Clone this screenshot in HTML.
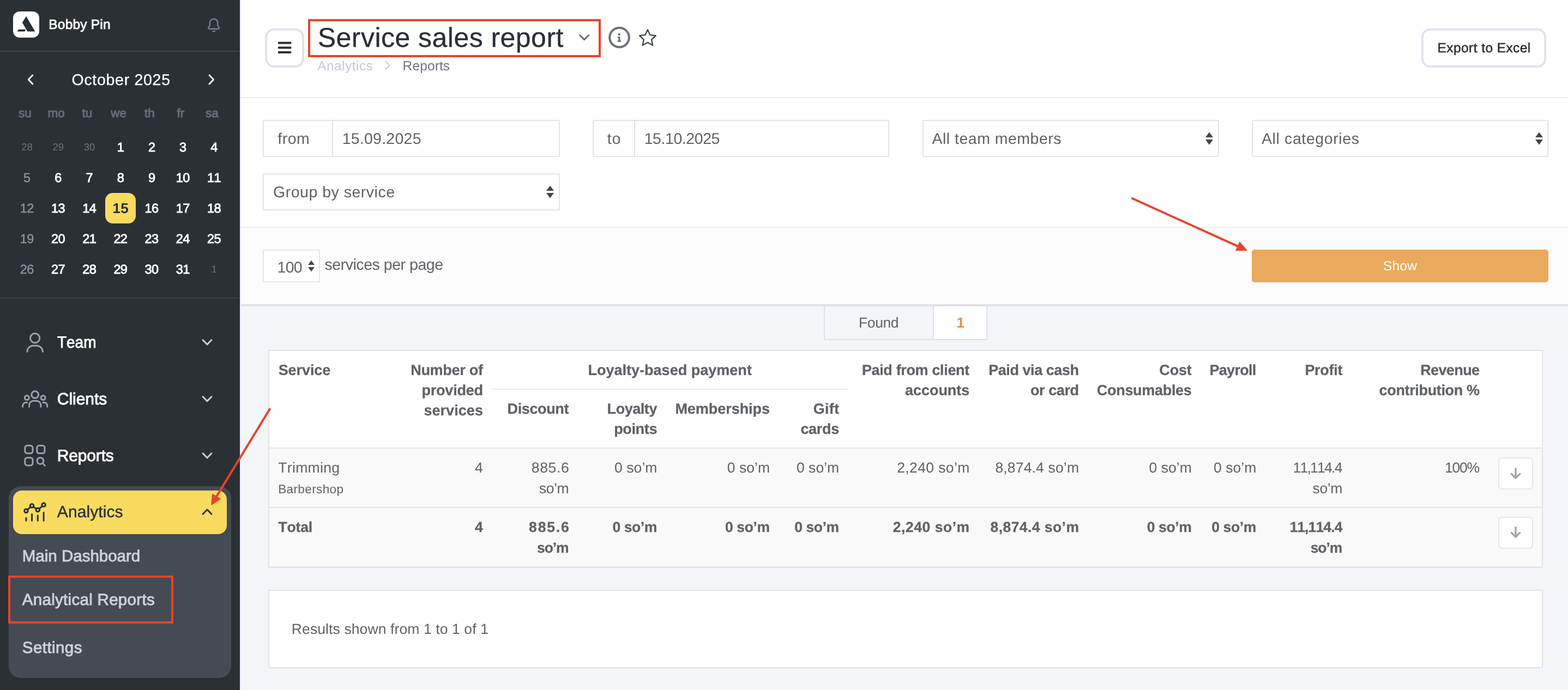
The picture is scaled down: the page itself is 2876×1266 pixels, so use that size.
<!DOCTYPE html>
<html lang="en">
<head>
<meta charset="utf-8">
<title>Service sales report</title>
<style>
html,body{margin:0;padding:0;}
body{width:2876px;height:1266px;overflow:hidden;position:relative;background:#f4f5f9;
 font-family:"Liberation Sans",sans-serif;font-kerning:none;text-rendering:geometricPrecision;}
.t{position:absolute;white-space:nowrap;display:block;}
.abs{position:absolute;}
svg{position:absolute;overflow:visible;}
#sidebar{position:absolute;left:0;top:0;width:440px;height:1266px;background:#2b3034;}
#main{position:absolute;left:440px;top:0;width:2436px;height:1266px;}
</style>
</head>
<body>
<div id="app" style="position:absolute;left:0;top:0;width:2876px;height:1266px;will-change:transform;">
<aside id="sidebar">
<div class="abs" style="left:24px;top:21px;width:48px;height:48px;border-radius:12px;background:#fff;"></div><svg width="48" height="48" style="left:24px;top:21px" viewBox="24 21 48 48"><path fill="#2b3034" d="M48 29.7 L64.4 57.8 H50.4 L40.9 41.5 Z"/><path fill="#2b3034" d="M33.9 54.1 H47.1 L45.5 57.8 H31.8 Z"/></svg>
<span class="t" style="left:89.3px;top:30px;font-size:24.5px;line-height:32px;color:#fff;letter-spacing:0.19px;-webkit-text-stroke:0.8px #fff;">Bobby Pin</span><svg width="30" height="30" style="left:377px;top:31px" viewBox="377 31 30 30" fill="none" stroke="#7c818e" stroke-width="2.3" stroke-linecap="round" stroke-linejoin="round"><path d="M384.9 46.5 V42 a7.2 7.2 0 0 1 14.4 0 V46.5 C399.3 48.6 402 49.2 402 51 a2 2 0 0 1 -2 2 H384.2 a2 2 0 0 1 -2 -2 C382.2 49.2 384.9 48.6 384.9 46.5 Z"/><path d="M390.2 57.3 H394"/></svg>
<div class="abs" style="left:0;top:92.5px;width:440px;height:2px;background:#41464c;"></div>
<svg width="20" height="24" style="left:46px;top:134px" viewBox="46 134 20 24" fill="none" stroke="#fff" stroke-width="3" stroke-linecap="round" stroke-linejoin="round"><path d="M59.8 138 L52.2 146 L59.8 154"/></svg><svg width="20" height="24" style="left:378px;top:134px" viewBox="378 134 20 24" fill="none" stroke="#fff" stroke-width="3" stroke-linecap="round" stroke-linejoin="round"><path d="M384 138 L391.6 146 L384 154"/></svg>
<span class="t" style="left:131.5px;top:129px;font-size:28.5px;line-height:37px;color:#fff;letter-spacing:0.71px;-webkit-text-stroke:0.3px #fff;">October 2025</span><span class="t" style="left:34.1px;top:193px;font-size:22.5px;line-height:29px;color:#666c79;-webkit-text-stroke:1px #666c79;">su</span><span class="t" style="left:87.4px;top:193px;font-size:22.5px;line-height:29px;color:#666c79;-webkit-text-stroke:1px #666c79;">mo</span><span class="t" style="left:150.6px;top:193px;font-size:22.5px;line-height:29px;color:#666c79;-webkit-text-stroke:1px #666c79;">tu</span><span class="t" style="left:203.2px;top:193px;font-size:22.5px;line-height:29px;color:#666c79;-webkit-text-stroke:1px #666c79;">we</span><span class="t" style="left:265.1px;top:193px;font-size:22.5px;line-height:29px;color:#666c79;-webkit-text-stroke:1px #666c79;">th</span><span class="t" style="left:324.6px;top:193px;font-size:22.5px;line-height:29px;color:#666c79;-webkit-text-stroke:1px #666c79;">fr</span><span class="t" style="left:377.1px;top:193px;font-size:22.5px;line-height:29px;color:#666c79;-webkit-text-stroke:1px #666c79;">sa</span>
<div class="abs" style="left:193px;top:354px;width:56px;height:56px;border-radius:14px;background:#f9db5f;"></div><span class="t" style="left:39.3px;top:258px;font-size:18.5px;line-height:24px;color:#6e727e;">28</span><span class="t" style="left:96.5px;top:258px;font-size:18.5px;line-height:24px;color:#6e727e;">29</span><span class="t" style="left:153.7px;top:258px;font-size:18.5px;line-height:24px;color:#6e727e;">30</span><span class="t" style="left:214.7px;top:255px;font-size:23.5px;line-height:31px;color:#fff;letter-spacing:-0.60px;-webkit-text-stroke:0.9px #fff;">1</span><span class="t" style="left:271.9px;top:255px;font-size:23.5px;line-height:31px;color:#fff;letter-spacing:-0.60px;-webkit-text-stroke:0.9px #fff;">2</span><span class="t" style="left:329.1px;top:255px;font-size:23.5px;line-height:31px;color:#fff;letter-spacing:-0.60px;-webkit-text-stroke:0.9px #fff;">3</span><span class="t" style="left:386.3px;top:255px;font-size:23.5px;line-height:31px;color:#fff;letter-spacing:-0.60px;-webkit-text-stroke:0.9px #fff;">4</span>
<span class="t" style="left:43.1px;top:311px;font-size:23.5px;line-height:31px;color:#8e92a0;letter-spacing:-0.60px;-webkit-text-stroke:0.4px #8e92a0;">5</span><span class="t" style="left:100.3px;top:311px;font-size:23.5px;line-height:31px;color:#fff;letter-spacing:-0.60px;-webkit-text-stroke:0.9px #fff;">6</span><span class="t" style="left:157.5px;top:311px;font-size:23.5px;line-height:31px;color:#fff;letter-spacing:-0.60px;-webkit-text-stroke:0.9px #fff;">7</span><span class="t" style="left:214.7px;top:311px;font-size:23.5px;line-height:31px;color:#fff;letter-spacing:-0.60px;-webkit-text-stroke:0.9px #fff;">8</span><span class="t" style="left:271.9px;top:311px;font-size:23.5px;line-height:31px;color:#fff;letter-spacing:-0.60px;-webkit-text-stroke:0.9px #fff;">9</span><span class="t" style="left:322.8px;top:311px;font-size:23.5px;line-height:31px;color:#fff;letter-spacing:-0.60px;-webkit-text-stroke:0.9px #fff;">10</span><span class="t" style="left:380.0px;top:311px;font-size:23.5px;line-height:31px;color:#fff;letter-spacing:-0.60px;-webkit-text-stroke:0.9px #fff;">11</span>
<span class="t" style="left:36.8px;top:367px;font-size:23.5px;line-height:31px;color:#8e92a0;letter-spacing:-0.60px;-webkit-text-stroke:0.4px #8e92a0;">12</span><span class="t" style="left:94.0px;top:367px;font-size:23.5px;line-height:31px;color:#fff;letter-spacing:-0.60px;-webkit-text-stroke:0.9px #fff;">13</span><span class="t" style="left:151.2px;top:367px;font-size:23.5px;line-height:31px;color:#fff;letter-spacing:-0.60px;-webkit-text-stroke:0.9px #fff;">14</span><span class="t" style="left:206.6px;top:365px;font-size:26px;line-height:34px;color:#2b3034;font-weight:700;letter-spacing:0.30px;">15</span><span class="t" style="left:265.6px;top:367px;font-size:23.5px;line-height:31px;color:#fff;letter-spacing:-0.60px;-webkit-text-stroke:0.9px #fff;">16</span><span class="t" style="left:322.8px;top:367px;font-size:23.5px;line-height:31px;color:#fff;letter-spacing:-0.60px;-webkit-text-stroke:0.9px #fff;">17</span><span class="t" style="left:380.0px;top:367px;font-size:23.5px;line-height:31px;color:#fff;letter-spacing:-0.60px;-webkit-text-stroke:0.9px #fff;">18</span>
<span class="t" style="left:36.8px;top:423px;font-size:23.5px;line-height:31px;color:#8e92a0;letter-spacing:-0.60px;-webkit-text-stroke:0.4px #8e92a0;">19</span><span class="t" style="left:94.0px;top:423px;font-size:23.5px;line-height:31px;color:#fff;letter-spacing:-0.60px;-webkit-text-stroke:0.9px #fff;">20</span><span class="t" style="left:151.2px;top:423px;font-size:23.5px;line-height:31px;color:#fff;letter-spacing:-0.60px;-webkit-text-stroke:0.9px #fff;">21</span><span class="t" style="left:208.4px;top:423px;font-size:23.5px;line-height:31px;color:#fff;letter-spacing:-0.60px;-webkit-text-stroke:0.9px #fff;">22</span><span class="t" style="left:265.6px;top:423px;font-size:23.5px;line-height:31px;color:#fff;letter-spacing:-0.60px;-webkit-text-stroke:0.9px #fff;">23</span><span class="t" style="left:322.8px;top:423px;font-size:23.5px;line-height:31px;color:#fff;letter-spacing:-0.60px;-webkit-text-stroke:0.9px #fff;">24</span><span class="t" style="left:380.0px;top:423px;font-size:23.5px;line-height:31px;color:#fff;letter-spacing:-0.60px;-webkit-text-stroke:0.9px #fff;">25</span>
<span class="t" style="left:36.8px;top:479px;font-size:23.5px;line-height:31px;color:#8e92a0;letter-spacing:-0.60px;-webkit-text-stroke:0.4px #8e92a0;">26</span><span class="t" style="left:94.0px;top:479px;font-size:23.5px;line-height:31px;color:#fff;letter-spacing:-0.60px;-webkit-text-stroke:0.9px #fff;">27</span><span class="t" style="left:151.2px;top:479px;font-size:23.5px;line-height:31px;color:#fff;letter-spacing:-0.60px;-webkit-text-stroke:0.9px #fff;">28</span><span class="t" style="left:208.4px;top:479px;font-size:23.5px;line-height:31px;color:#fff;letter-spacing:-0.60px;-webkit-text-stroke:0.9px #fff;">29</span><span class="t" style="left:265.6px;top:479px;font-size:23.5px;line-height:31px;color:#fff;letter-spacing:-0.60px;-webkit-text-stroke:0.9px #fff;">30</span><span class="t" style="left:322.8px;top:479px;font-size:23.5px;line-height:31px;color:#fff;letter-spacing:-0.60px;-webkit-text-stroke:0.9px #fff;">31</span><span class="t" style="left:387.7px;top:482px;font-size:18.5px;line-height:24px;color:#6e727e;">1</span>
<div class="abs" style="left:0;top:546px;width:440px;height:2px;background:#3a3f45;"></div>
<svg width="44" height="44" style="left:42px;top:606px" viewBox="42 606 44 44" fill="none" stroke="#9da1ab" stroke-width="3" stroke-linecap="round"><circle cx="64.1" cy="620.4" r="8.6"/><path d="M49.9 645.3 A11 11 0 0 1 60.9 634.3 H67.3 A11 11 0 0 1 78.3 645.3"/></svg><span class="t" style="left:104.9px;top:609px;font-size:30px;line-height:39px;color:#fff;transform:scaleX(0.9313);transform-origin:0 0;-webkit-text-stroke:0.9px #fff;">Team</span><svg width="24" height="18" style="left:368px;top:619px" viewBox="368 -9 24 18" fill="none" stroke="#cdd0d6" stroke-width="3" stroke-linecap="round" stroke-linejoin="round"><path d="M372 -4.2 L380 4 L388 -4.2"/></svg>
<svg width="56" height="40" style="left:36px;top:712px" viewBox="36 712 56 40" fill="none" stroke="#9da1ab" stroke-width="3" stroke-linecap="round"><circle cx="64.2" cy="724.2" r="6.4"/><circle cx="49.3" cy="729.8" r="4"/><circle cx="79.1" cy="729.8" r="4"/><path d="M53.6 746.3 V743.4 a8 8 0 0 1 8 -8 h5.2 a8 8 0 0 1 8 8 V746.3"/><path d="M41.7 746.3 v-1.8 a6 6 0 0 1 6 -6 h1.8"/><path d="M86.7 746.3 v-1.8 a6 6 0 0 0 -6 -6 h-1.8"/></svg><span class="t" style="left:104.8px;top:713px;font-size:30px;line-height:39px;color:#fff;letter-spacing:-0.03px;-webkit-text-stroke:0.9px #fff;">Clients</span><svg width="24" height="18" style="left:368px;top:723px" viewBox="368 -9 24 18" fill="none" stroke="#cdd0d6" stroke-width="3" stroke-linecap="round" stroke-linejoin="round"><path d="M372 -4.2 L380 4 L388 -4.2"/></svg>
<svg width="48" height="48" style="left:40px;top:812px" viewBox="40 812 48 48" fill="none" stroke="#9da1ab" stroke-width="3" stroke-linecap="round"><rect x="45.8" y="817.6" width="14.2" height="14.2" rx="4.2"/><rect x="67.8" y="817.6" width="14.2" height="14.2" rx="4.2"/><rect x="45.8" y="839.7" width="14.2" height="14.2" rx="4.2"/><circle cx="73.9" cy="845.6" r="5.9"/><path d="M78.3 850 L82.3 854.2"/></svg><span class="t" style="left:104.8px;top:817px;font-size:30px;line-height:39px;color:#fff;letter-spacing:-0.17px;-webkit-text-stroke:0.9px #fff;">Reports</span><svg width="24" height="18" style="left:368px;top:827px" viewBox="368 -9 24 18" fill="none" stroke="#cdd0d6" stroke-width="3" stroke-linecap="round" stroke-linejoin="round"><path d="M372 -4.2 L380 4 L388 -4.2"/></svg>
<div class="abs" style="left:16px;top:892px;width:408px;height:352px;border-radius:22px;background:#464a53;"></div><div class="abs" style="left:24px;top:900px;width:392px;height:80px;border-radius:16px;background:#f9db5f;"></div><svg width="48" height="44" style="left:40px;top:918px" viewBox="40 918 48 44" fill="none" stroke="#2b3038" stroke-width="3" stroke-linecap="round"><path d="M50.4 935.1 L56 930.2 M61.3 929.9 L66.6 933.6 M72.1 933.7 L77.5 928.5"/><circle cx="47.9" cy="937.3" r="3.3"/><circle cx="58.5" cy="928" r="3.3"/><circle cx="69.3" cy="935.5" r="3.3"/><circle cx="80.1" cy="926.3" r="3.3"/><path d="M47.9 950.4 V955.2 M58.5 943.6 V955.2 M69.3 945.8 V955.2 M80.1 940.4 V955.2"/></svg><span class="t" style="left:104.8px;top:920px;font-size:30px;line-height:39px;color:#2b3038;letter-spacing:0.09px;-webkit-text-stroke:0.4px #2b3038;">Analytics</span><svg width="24" height="18" style="left:368px;top:929.6px" viewBox="368 -9 24 18" fill="none" stroke="#2b3038" stroke-width="3" stroke-linecap="round" stroke-linejoin="round"><path d="M372 4.2 L380 -4 L388 4.2"/></svg>
<span class="t" style="left:40.8px;top:1002px;font-size:29.5px;line-height:38px;color:#cdd0da;-webkit-text-stroke:0.95px #cdd0da;">Main Dashboard</span><span class="t" style="left:40.8px;top:1082px;font-size:29.5px;line-height:38px;color:#cdd0da;letter-spacing:0.30px;-webkit-text-stroke:0.95px #cdd0da;">Analytical Reports</span><span class="t" style="left:40.8px;top:1170px;font-size:29.5px;line-height:38px;color:#cdd0da;letter-spacing:0.44px;-webkit-text-stroke:0.95px #cdd0da;">Settings</span>
</aside>
<main id="main-area">
<div style="position:absolute;left:440px;top:0px;width:2436px;height:178px;background:#fff;"></div><div style="position:absolute;left:440px;top:178px;width:2436px;height:2px;background:#ededef;"></div><div style="position:absolute;left:486px;top:52px;width:72px;height:72px;box-sizing:border-box;border:4px solid #e0e3eb;border-radius:17px;background:#fff;"></div><svg width="30" height="26" style="left:507px;top:75px" viewBox="507 75 30 26" fill="#2b3034"><rect x="509.9" y="76.8" width="24.4" height="4" rx="1"/><rect x="509.9" y="85.4" width="24.4" height="4" rx="1"/><rect x="509.9" y="94.1" width="24.4" height="4" rx="1"/></svg>
<span class="t" style="left:582.8px;top:37px;font-size:50px;line-height:65px;color:#2b3036;letter-spacing:0.46px;-webkit-text-stroke:0.3px #2b3036;">Service sales report</span><svg width="26" height="18" style="left:1058px;top:60px" viewBox="1058 60 26 18" fill="none" stroke="#5d636e" stroke-width="2.8" stroke-linecap="round" stroke-linejoin="round"><path d="M1063.6 64.8 L1071.6 72.8 L1079.6 64.8"/></svg><svg width="48" height="48" style="left:1112px;top:45px" viewBox="1112 45 48 48"><circle cx="1136" cy="68.7" r="17.8" fill="none" stroke="#6a707c" stroke-width="4"/><circle cx="1135.8" cy="62.9" r="2.25" fill="#6a707c"/><path d="M1132.8 67.3 H1137.5 V74.3 H1139.1 V77 H1132.8 V74.3 H1134.3 V69.7 H1132.8 Z" fill="#6a707c"/></svg><svg width="40" height="40" style="left:1168px;top:50px" viewBox="1168 50 40 40" fill="none" stroke="#3d434c" stroke-width="2.3" stroke-linejoin="round"><path d="M1187.9 54.6 L1192.4 64.2 L1202.8 65.4 L1195.1 72.6 L1197.1 83.0 L1187.9 77.9 L1178.7 83.0 L1180.7 72.6 L1173.0 65.4 L1183.4 64.2 Z"/></svg>
<span class="t" style="left:582.2px;top:106px;font-size:24.5px;line-height:32px;color:#c4c9d5;letter-spacing:0.42px;">Analytics</span><svg width="16" height="22" style="left:703px;top:109px" viewBox="703 109 16 22" fill="none" stroke="#c9cdd8" stroke-width="2.2" stroke-linecap="round" stroke-linejoin="round"><path d="M707.5 113 L714.5 120 L707.5 127"/></svg><span class="t" style="left:738.6px;top:106px;font-size:24.5px;line-height:32px;color:#6b7180;letter-spacing:0.12px;">Reports</span>
<div style="position:absolute;left:2607.3px;top:52px;width:228.4px;height:72px;box-sizing:border-box;border:4px solid #e0e3eb;border-radius:16px;background:#fff;"></div><span class="t" style="left:2636.6px;top:73px;font-size:24.5px;line-height:32px;color:#2b3036;letter-spacing:0.42px;-webkit-text-stroke:0.55px #2b3036;">Export to Excel</span>
<div style="position:absolute;left:440px;top:180px;width:2436px;height:237px;background:#fff;"></div><div style="position:absolute;left:440px;top:416px;width:2436px;height:2px;background:#edeef0;"></div><div style="position:absolute;left:482.3px;top:220px;width:544.7px;height:68px;box-sizing:border-box;border:2px solid #e2e4e6;border-radius:2px;background:#fff;"></div><div style="position:absolute;left:609px;top:220px;width:2px;height:68px;background:#e1e2e4;"></div><span class="t" style="left:509.3px;top:237px;font-size:28.5px;line-height:37px;color:#5f6266;letter-spacing:0.50px;">from</span><span class="t" style="left:627.7px;top:237px;font-size:28.5px;line-height:37px;color:#5f6266;letter-spacing:0.24px;">15.09.2025</span><div style="position:absolute;left:1087.3px;top:220px;width:543.3px;height:68px;box-sizing:border-box;border:2px solid #e2e4e6;border-radius:2px;background:#fff;"></div><div style="position:absolute;left:1163px;top:220px;width:2px;height:68px;background:#e1e2e4;"></div><span class="t" style="left:1113.8px;top:237px;font-size:28.5px;line-height:37px;color:#5f6266;letter-spacing:0.76px;">to</span><span class="t" style="left:1181.7px;top:237px;font-size:28.5px;line-height:37px;color:#5f6266;letter-spacing:-0.43px;">15.10.2025</span>
<div style="position:absolute;left:1691.5px;top:220px;width:544.5px;height:68px;box-sizing:border-box;border:2px solid #e2e4e6;border-radius:2px;background:#fff;"></div><span class="t" style="left:1709.5px;top:237px;font-size:28.5px;line-height:37px;color:#5f6266;letter-spacing:0.49px;">All team members</span><svg width="16" height="26" style="left:2210px;top:241px" viewBox="0 0 16 26"><path fill="#444" d="M8 1.5 L14.9 10.9 H1.1 Z M8 24.7 L14.9 15 H1.1 Z"/></svg><div style="position:absolute;left:2296px;top:220px;width:544px;height:68px;box-sizing:border-box;border:2px solid #e2e4e6;border-radius:2px;background:#fff;"></div><span class="t" style="left:2314.0px;top:237px;font-size:28.5px;line-height:37px;color:#5f6266;letter-spacing:0.61px;">All categories</span><svg width="16" height="26" style="left:2814.6px;top:241px" viewBox="0 0 16 26"><path fill="#444" d="M8 1.5 L14.9 10.9 H1.1 Z M8 24.7 L14.9 15 H1.1 Z"/></svg><div style="position:absolute;left:482.3px;top:318.3px;width:544.7px;height:67.7px;box-sizing:border-box;border:2px solid #e2e4e6;border-radius:2px;background:#fff;"></div><span class="t" style="left:501.0px;top:335px;font-size:28.5px;line-height:37px;color:#5f6266;letter-spacing:0.51px;">Group by service</span><svg width="16" height="26" style="left:1000.8px;top:339px" viewBox="0 0 16 26"><path fill="#444" d="M8 1.5 L14.9 10.9 H1.1 Z M8 24.7 L14.9 15 H1.1 Z"/></svg>
<div style="position:absolute;left:440px;top:418px;width:2436px;height:140px;background:#fcfcfd;"></div><div style="position:absolute;left:440px;top:557.7px;width:2436px;height:4.3px;background:#dfe2e8;"></div><div style="position:absolute;left:482.2px;top:458.1px;width:104.6px;height:59.8px;box-sizing:border-box;border:2px solid #e4e6e8;border-radius:2px;background:#fff;"></div><span class="t" style="left:508.6px;top:473px;font-size:28.5px;line-height:37px;color:#5f6266;letter-spacing:-0.76px;">100</span><svg width="14" height="22" style="left:564.1px;top:476.7px" viewBox="0 0 14 22"><path fill="#444" d="M7 0.8 L13 9 H1 Z M7 21.2 L13 13 H1 Z"/></svg><span class="t" style="left:595.5px;top:468px;font-size:28.5px;line-height:37px;color:#5f6266;letter-spacing:-0.46px;">services per page</span><div style="position:absolute;left:2296px;top:458px;width:544px;height:60px;background:#eba95d;border-radius:5px;"></div><span class="t" style="left:2537.0px;top:473px;font-size:24.5px;line-height:32px;color:#fff;letter-spacing:0.21px;">Show</span>
<div style="position:absolute;left:1511px;top:560px;width:299.5px;height:63.8px;box-sizing:border-box;border:2px solid #dde1e6;background:#f4f5f9;"></div><div style="position:absolute;left:1711px;top:560px;width:99.5px;height:63.8px;box-sizing:border-box;border:2px solid #dde1e6;background:#fff;"></div><span class="t" style="left:1575.0px;top:575px;font-size:26.5px;line-height:34px;color:#5f6266;letter-spacing:-0.40px;">Found</span><span class="t" style="left:1754.4px;top:575px;font-size:26.5px;line-height:34px;color:#ec8c45;font-weight:700;">1</span>
<section id="report-table"><div style="position:absolute;left:492px;top:642px;width:2338px;height:399.5px;box-sizing:border-box;border:2px solid #e3e4e6;border-bottom-width:3.5px;background:#fff;"></div><div style="position:absolute;left:494px;top:823px;width:2334px;height:215px;background:#f9f9f9;"></div><div style="position:absolute;left:494px;top:821px;width:2334px;height:2px;background:#e3e4e6;"></div><div style="position:absolute;left:494px;top:930px;width:2334px;height:2px;background:#e3e4e6;"></div><div style="position:absolute;left:902px;top:712.7px;width:653.7px;height:2px;background:#e6e8ec;"></div>
<span class="t" style="left:510.7px;top:662px;font-size:27px;line-height:35px;color:#5f6266;font-weight:700;letter-spacing:-0.09px;-webkit-text-stroke:0.25px #5f6266;">Service</span><span class="t" style="left:753.2px;top:662px;font-size:27px;line-height:35px;color:#5f6266;font-weight:700;letter-spacing:-0.29px;-webkit-text-stroke:0.25px #5f6266;">Number of</span><span class="t" style="left:773.6px;top:699px;font-size:27px;line-height:35px;color:#5f6266;font-weight:700;letter-spacing:-0.24px;-webkit-text-stroke:0.25px #5f6266;">provided</span><span class="t" style="left:777.4px;top:736px;font-size:27px;line-height:35px;color:#5f6266;font-weight:700;letter-spacing:0.06px;-webkit-text-stroke:0.25px #5f6266;">services</span><span class="t" style="left:1078.4px;top:662px;font-size:27px;line-height:35px;color:#5f6266;font-weight:700;letter-spacing:0.02px;-webkit-text-stroke:0.25px #5f6266;">Loyalty-based payment</span><span class="t" style="left:930.5px;top:733px;font-size:27px;line-height:35px;color:#5f6266;font-weight:700;letter-spacing:-0.36px;-webkit-text-stroke:0.25px #5f6266;">Discount</span><span class="t" style="left:1113.6px;top:733px;font-size:27px;line-height:35px;color:#5f6266;font-weight:700;letter-spacing:-0.45px;-webkit-text-stroke:0.25px #5f6266;">Loyalty</span><span class="t" style="left:1126.2px;top:770px;font-size:27px;line-height:35px;color:#5f6266;font-weight:700;letter-spacing:-0.35px;-webkit-text-stroke:0.25px #5f6266;">points</span><span class="t" style="left:1238.4px;top:733px;font-size:27px;line-height:35px;color:#5f6266;font-weight:700;letter-spacing:-0.04px;-webkit-text-stroke:0.25px #5f6266;">Memberships</span><span class="t" style="left:1491.7px;top:733px;font-size:27px;line-height:35px;color:#5f6266;font-weight:700;letter-spacing:0.34px;-webkit-text-stroke:0.25px #5f6266;">Gift</span><span class="t" style="left:1468.4px;top:770px;font-size:27px;line-height:35px;color:#5f6266;font-weight:700;letter-spacing:-0.30px;-webkit-text-stroke:0.25px #5f6266;">cards</span><span class="t" style="left:1580.9px;top:662px;font-size:27px;line-height:35px;color:#5f6266;font-weight:700;letter-spacing:-0.35px;-webkit-text-stroke:0.25px #5f6266;">Paid from client</span><span class="t" style="left:1660.1px;top:699px;font-size:27px;line-height:35px;color:#5f6266;font-weight:700;letter-spacing:-0.06px;-webkit-text-stroke:0.25px #5f6266;">accounts</span><span class="t" style="left:1813.2px;top:662px;font-size:27px;line-height:35px;color:#5f6266;font-weight:700;letter-spacing:-0.44px;-webkit-text-stroke:0.25px #5f6266;">Paid via cash</span><span class="t" style="left:1890.0px;top:699px;font-size:27px;line-height:35px;color:#5f6266;font-weight:700;letter-spacing:-0.42px;-webkit-text-stroke:0.25px #5f6266;">or card</span><span class="t" style="left:2126.3px;top:662px;font-size:27px;line-height:35px;color:#5f6266;font-weight:700;letter-spacing:-0.16px;-webkit-text-stroke:0.25px #5f6266;">Cost</span><span class="t" style="left:2011.8px;top:699px;font-size:27px;line-height:35px;color:#5f6266;font-weight:700;letter-spacing:-0.30px;-webkit-text-stroke:0.25px #5f6266;">Consumables</span><span class="t" style="left:2218.5px;top:662px;font-size:27px;line-height:35px;color:#5f6266;font-weight:700;letter-spacing:-0.71px;-webkit-text-stroke:0.25px #5f6266;">Payroll</span><span class="t" style="left:2393.4px;top:662px;font-size:27px;line-height:35px;color:#5f6266;font-weight:700;letter-spacing:-0.30px;-webkit-text-stroke:0.25px #5f6266;">Profit</span><span class="t" style="left:2605.2px;top:662px;font-size:27px;line-height:35px;color:#5f6266;font-weight:700;letter-spacing:-0.62px;-webkit-text-stroke:0.25px #5f6266;">Revenue</span><span class="t" style="left:2529.6px;top:699px;font-size:27px;line-height:35px;color:#5f6266;font-weight:700;letter-spacing:-0.35px;-webkit-text-stroke:0.25px #5f6266;">contribution %</span>
<span class="t" style="left:510.2px;top:841px;font-size:26.5px;line-height:34px;color:#5f6266;letter-spacing:0.35px;">Trimming</span><span class="t" style="left:510.2px;top:883px;font-size:22.5px;line-height:29px;color:#5f6266;letter-spacing:0.39px;">Barbershop</span><span class="t" style="left:871.1px;top:841px;font-size:26.5px;line-height:34px;color:#5f6266;letter-spacing:0.75px;">4</span><span class="t" style="left:974.8px;top:841px;font-size:26.5px;line-height:34px;color:#5f6266;letter-spacing:0.65px;">885.6</span><span class="t" style="left:988.8px;top:879px;font-size:26.5px;line-height:34px;color:#5f6266;letter-spacing:-0.35px;">so’m</span><span class="t" style="left:1127.1px;top:841px;font-size:26.5px;line-height:34px;color:#5f6266;letter-spacing:0.05px;">0 so’m</span><span class="t" style="left:1333.7px;top:841px;font-size:26.5px;line-height:34px;color:#5f6266;letter-spacing:0.05px;">0 so’m</span><span class="t" style="left:1460.9px;top:841px;font-size:26.5px;line-height:34px;color:#5f6266;letter-spacing:0.05px;">0 so’m</span><span class="t" style="left:1645.2px;top:841px;font-size:26.5px;line-height:34px;color:#5f6266;letter-spacing:0.38px;">2,240 so’m</span><span class="t" style="left:1825.4px;top:841px;font-size:26.5px;line-height:34px;color:#5f6266;letter-spacing:0.17px;">8,874.4 so’m</span><span class="t" style="left:2107.5px;top:841px;font-size:26.5px;line-height:34px;color:#5f6266;letter-spacing:0.05px;">0 so’m</span><span class="t" style="left:2226.0px;top:841px;font-size:26.5px;line-height:34px;color:#5f6266;letter-spacing:0.05px;">0 so’m</span><span class="t" style="left:2371.4px;top:841px;font-size:26.5px;line-height:34px;color:#5f6266;letter-spacing:-1.73px;">11,114.4</span><span class="t" style="left:2407.5px;top:879px;font-size:26.5px;line-height:34px;color:#5f6266;letter-spacing:-0.35px;">so’m</span><span class="t" style="left:2650.0px;top:841px;font-size:26.5px;line-height:34px;color:#5f6266;letter-spacing:-1.27px;">100%</span>
<span class="t" style="left:510.4px;top:950px;font-size:26.5px;line-height:34px;color:#5f6266;font-weight:700;letter-spacing:-0.12px;-webkit-text-stroke:0.25px #5f6266;">Total</span><span class="t" style="left:871.1px;top:950px;font-size:26.5px;line-height:34px;color:#5f6266;font-weight:700;letter-spacing:0.30px;-webkit-text-stroke:0.25px #5f6266;">4</span><span class="t" style="left:970.1px;top:950px;font-size:26.5px;line-height:34px;color:#5f6266;font-weight:700;letter-spacing:1.83px;-webkit-text-stroke:0.25px #5f6266;">885.6</span><span class="t" style="left:985.0px;top:988px;font-size:26.5px;line-height:34px;color:#5f6266;font-weight:700;letter-spacing:-1.06px;-webkit-text-stroke:0.25px #5f6266;">so’m</span><span class="t" style="left:1123.4px;top:950px;font-size:26.5px;line-height:34px;color:#5f6266;font-weight:700;letter-spacing:-0.40px;-webkit-text-stroke:0.25px #5f6266;">0 so’m</span><span class="t" style="left:1330.0px;top:950px;font-size:26.5px;line-height:34px;color:#5f6266;font-weight:700;letter-spacing:-0.40px;-webkit-text-stroke:0.25px #5f6266;">0 so’m</span><span class="t" style="left:1457.2px;top:950px;font-size:26.5px;line-height:34px;color:#5f6266;font-weight:700;letter-spacing:-0.40px;-webkit-text-stroke:0.25px #5f6266;">0 so’m</span><span class="t" style="left:1637.7px;top:950px;font-size:26.5px;line-height:34px;color:#5f6266;font-weight:700;letter-spacing:0.55px;-webkit-text-stroke:0.25px #5f6266;">2,240 so’m</span><span class="t" style="left:1816.5px;top:950px;font-size:26.5px;line-height:34px;color:#5f6266;font-weight:700;letter-spacing:0.44px;-webkit-text-stroke:0.25px #5f6266;">8,874.4 so’m</span><span class="t" style="left:2103.8px;top:950px;font-size:26.5px;line-height:34px;color:#5f6266;font-weight:700;letter-spacing:-0.40px;-webkit-text-stroke:0.25px #5f6266;">0 so’m</span><span class="t" style="left:2222.3px;top:950px;font-size:26.5px;line-height:34px;color:#5f6266;font-weight:700;letter-spacing:-0.40px;-webkit-text-stroke:0.25px #5f6266;">0 so’m</span><span class="t" style="left:2365.4px;top:950px;font-size:26.5px;line-height:34px;color:#5f6266;font-weight:700;letter-spacing:-0.88px;-webkit-text-stroke:0.25px #5f6266;">11,114.4</span><span class="t" style="left:2403.7px;top:988px;font-size:26.5px;line-height:34px;color:#5f6266;font-weight:700;letter-spacing:-1.06px;-webkit-text-stroke:0.25px #5f6266;">so’m</span>
<div style="position:absolute;left:2747.7px;top:839.3px;width:63.9px;height:59.2px;box-sizing:border-box;border:2px solid #e5e7ea;border-radius:7px;background:#fff;"></div><svg width="28" height="28" style="left:2765.6px;top:853.5px" viewBox="0 0 28 28" fill="none" stroke="#a4a4a5" stroke-width="3.3" stroke-linecap="round" stroke-linejoin="round"><path d="M14 5.6 V23 M6.2 15.4 L14 23.4 L21.8 15.4"/></svg><div style="position:absolute;left:2747.7px;top:948.2px;width:63.9px;height:59.2px;box-sizing:border-box;border:2px solid #e5e7ea;border-radius:7px;background:#fff;"></div><svg width="28" height="28" style="left:2765.6px;top:962.4px" viewBox="0 0 28 28" fill="none" stroke="#a4a4a5" stroke-width="3.3" stroke-linecap="round" stroke-linejoin="round"><path d="M14 5.6 V23 M6.2 15.4 L14 23.4 L21.8 15.4"/></svg></section>
<div style="position:absolute;left:492px;top:1082px;width:2338px;height:143.5px;box-sizing:border-box;border:2px solid #e2e3e6;background:#fff;"></div><span class="t" style="left:534.8px;top:1137px;font-size:26.5px;line-height:34px;color:#5f6266;letter-spacing:0.11px;">Results shown from 1 to 1 of 1</span>
</main>
<div style="position:absolute;left:440px;top:0px;width:2px;height:1266px;background:#e9ecfa;"></div><div id="annotations"><div style="position:absolute;left:565px;top:35px;width:537px;height:70px;box-sizing:border-box;border:4px solid #e8432a;"></div><div style="position:absolute;left:15px;top:1056px;width:303px;height:88px;box-sizing:border-box;border:4px solid #e8432a;"></div><svg width="2876" height="1266" style="left:0;top:0;pointer-events:none" viewBox="0 0 2876 1266"><path d="M2075.2 363.3 L2271.6 452.4" stroke="#e8432a" stroke-width="4" fill="none"/><path d="M2288.0 459.8 L2265.9 460.2 L2273.7 442.9 Z" fill="#e8432a"/></svg><svg width="2876" height="1266" style="left:0;top:0;pointer-events:none" viewBox="0 0 2876 1266"><path d="M495.6 749.2 L396.4 912.0" stroke="#e8432a" stroke-width="4" fill="none"/><path d="M387.0 927.4 L389.3 905.4 L405.5 915.3 Z" fill="#e8432a"/></svg></div>
</div>
</body>
</html>
